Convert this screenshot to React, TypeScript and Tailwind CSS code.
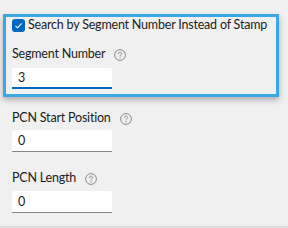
import React from 'react'

function HelpIcon() {
  return (
    <svg width="12" height="12" viewBox="0 0 12 12" className="shrink-0">
      <circle cx="6" cy="6" r="5.4" fill="none" stroke="#8a8a8a" strokeWidth="1" />
      <path
        d="M4.4 4.7 C4.4 3.7 5.1 3.2 6 3.2 C6.9 3.2 7.6 3.7 7.6 4.6 C7.6 5.6 6.1 5.8 6.1 7"
        fill="none"
        stroke="#8a8a8a"
        strokeWidth="1"
        strokeLinecap="round"
      />
      <circle cx="6.1" cy="8.8" r="0.65" fill="#8a8a8a" />
    </svg>
  )
}

function Label({ text }: { text: string }) {
  return (
    <div className="flex h-[18px] items-center gap-[9px]">
      <span className="whitespace-nowrap leading-[18px]">{text}</span>
      <span className="mt-[2px]">
        <HelpIcon />
      </span>
    </div>
  )
}

function TextBox({ value, focused }: { value: string; focused?: boolean }) {
  return (
    <div
      className={`flex w-[100px] items-center rounded-t-[3px] bg-white pl-[6px] ${
        focused ? 'h-[21px] border-b-2 border-[#0067c0]' : 'h-[22px] border-b border-[#868686]'
      }`}
    >
      <span className="leading-[16px]">{value}</span>
    </div>
  )
}

export default function App() {
  return (
    <div
      className="relative h-[228px] w-[288px] overflow-hidden bg-[#f0f0f0] text-[12.5px] tracking-[-0.2px] text-[#1b1b1b]"
      style={{ fontFamily: 'Lato, "Noto Sans", sans-serif' }}
    >
      <div className="ml-[3px] mt-[14px] h-[83px] w-[276px] border-[3px] border-[#3aa8e4] px-[6px] shadow-[0_3px_6px_rgba(0,0,0,0.28)]">
        <div className="flex h-[16px] items-center gap-[3px]">
          <span className="flex h-[13px] w-[13px] shrink-0 items-center justify-center rounded-[3px] bg-[#0067c0]">
            <svg width="9" height="9" viewBox="0 0 9 9">
              <path d="M1.5 4.8 L3.6 6.8 L7.6 2.3" fill="none" stroke="white" strokeWidth="1.1" />
            </svg>
          </span>
          <span className="whitespace-nowrap leading-[16px]">Search by Segment Number Instead of Stamp</span>
        </div>
        <div className="mt-[12px]">
          <Label text="Segment Number" />
          <div className="mt-[5px]">
            <TextBox value="3" focused />
          </div>
        </div>
      </div>

      <div className="ml-[12px] mt-[12px]">
        <Label text="PCN Start Position" />
        <div className="mt-[3px]">
          <TextBox value="0" />
        </div>
        <div className="mt-[17px]">
          <Label text="PCN Length" />
        </div>
        <div className="mt-[4px]">
          <TextBox value="0" />
        </div>
      </div>

      <div className="absolute bottom-0 left-0 h-[2px] w-full border-t border-[#d6d6d6] bg-[#e9e9e9]" />
    </div>
  )
}
